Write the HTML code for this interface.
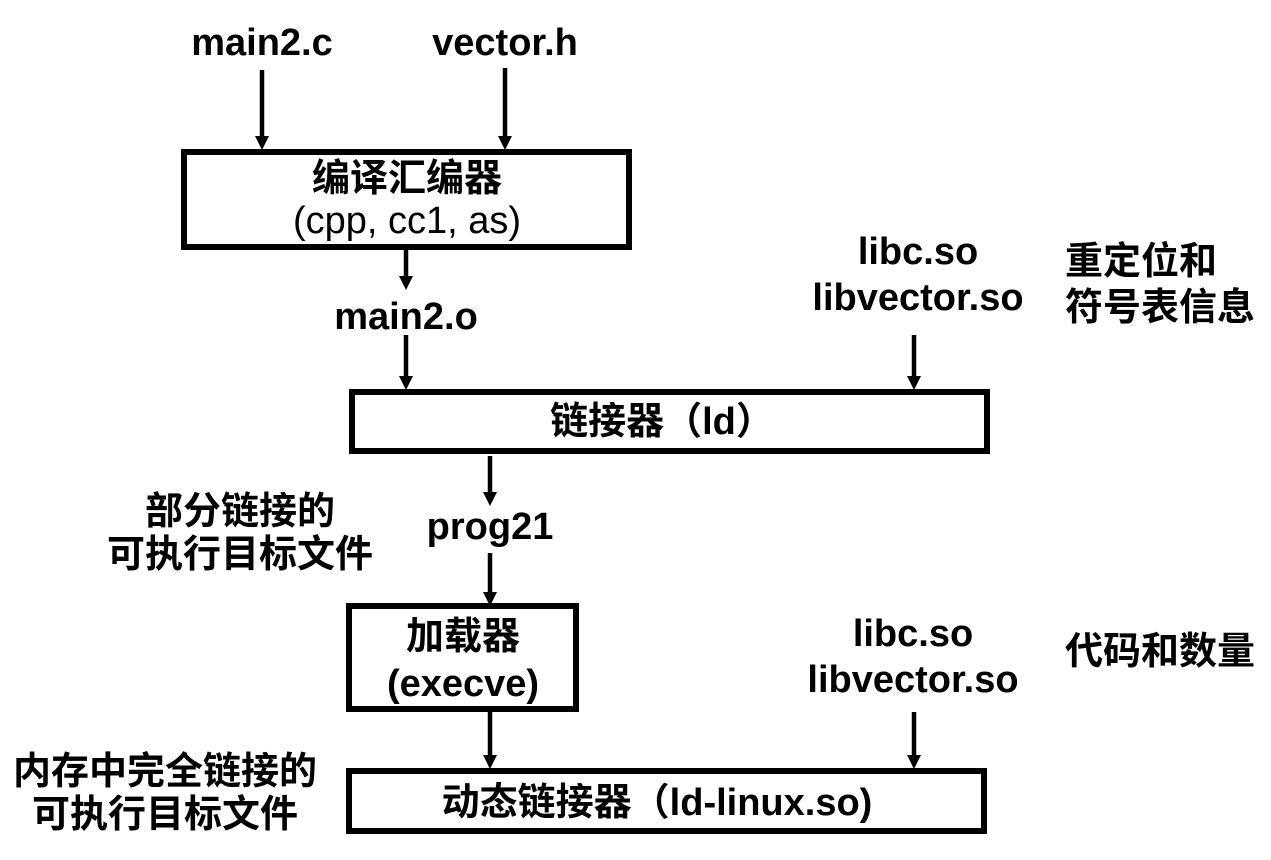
<!DOCTYPE html>
<html><head><meta charset="utf-8">
<style>
html,body{margin:0;padding:0;background:#fff;}
body{width:1271px;height:860px;position:relative;overflow:hidden;font-family:"Liberation Sans","Noto Sans CJK SC",sans-serif;color:#000;}
.t{position:absolute;font-weight:bold;font-size:38px;line-height:1;white-space:nowrap;transform:translateX(-50%);}
.l{position:absolute;font-weight:bold;font-size:38px;line-height:1;white-space:nowrap;}
.n{font-weight:normal;}
.box{position:absolute;border:6px solid #000;box-sizing:border-box;}
svg{position:absolute;left:0;top:0;}
</style></head><body>
<svg width="1271" height="860">
<g stroke="#000" stroke-width="4.5">
<line x1="262" y1="70" x2="262" y2="138"/>
<line x1="505" y1="68" x2="505" y2="138"/>
<line x1="406" y1="250" x2="406" y2="278"/>
<line x1="406" y1="335" x2="406" y2="378"/>
<line x1="914" y1="335" x2="914" y2="378"/>
<line x1="490" y1="456" x2="490" y2="494"/>
<line x1="490" y1="553" x2="490" y2="594"/>
<line x1="490" y1="712" x2="490" y2="757"/>
<line x1="914" y1="712" x2="914" y2="757"/>
</g>
<g fill="#000">
<polygon points="255,136 269,136 262,150"/>
<polygon points="498,136 512,136 505,150"/>
<polygon points="399,276 413,276 406,290"/>
<polygon points="399,376 413,376 406,390"/>
<polygon points="907,376 921,376 914,390"/>
<polygon points="483,492 497,492 490,506"/>
<polygon points="483,592 497,592 490,606"/>
<polygon points="483,755 497,755 490,769"/>
<polygon points="907,755 921,755 914,769"/>
</g>
</svg>

<div class="t" style="left:262px;top:24px;">main2.c</div>
<div class="t" style="left:505px;top:24px;">vector.h</div>

<div class="box" style="left:181px;top:149px;width:451px;height:101px;"></div>
<div class="t" style="left:407px;top:160px;">编译汇编器</div>
<div class="t n" style="left:407px;top:202px;">(cpp, cc1, as)</div>

<div class="t" style="left:406px;top:298px;">main2.o</div>

<div class="t" style="left:918px;top:233px;">libc.so</div>
<div class="t" style="left:918px;top:279px;">libvector.so</div>
<div class="l" style="left:1065px;top:243px;">重定位和</div>
<div class="l" style="left:1065px;top:289px;">符号表信息</div>

<div class="box" style="left:349px;top:389px;width:641px;height:65px;"></div>
<div class="t" style="left:662px;top:403px;">链接器（ld）</div>

<div class="t" style="left:240px;top:493px;">部分链接的</div>
<div class="t" style="left:240px;top:536px;">可执行目标文件</div>
<div class="t" style="left:490px;top:508px;">prog21</div>

<div class="box" style="left:346px;top:603px;width:233px;height:109px;"></div>
<div class="t" style="left:463px;top:618px;">加载器</div>
<div class="t" style="left:463px;top:665px;">(execve)</div>

<div class="t" style="left:913px;top:615px;">libc.so</div>
<div class="t" style="left:913px;top:661px;">libvector.so</div>
<div class="l" style="left:1065px;top:633px;">代码和数量</div>

<div class="t" style="left:165px;top:753px;">内存中完全链接的</div>
<div class="t" style="left:165px;top:796px;">可执行目标文件</div>

<div class="box" style="left:346px;top:768px;width:641px;height:66px;"></div>
<div class="t" style="left:657px;top:784px;">动态链接器（ld-linux.so)</div>
</body></html>
